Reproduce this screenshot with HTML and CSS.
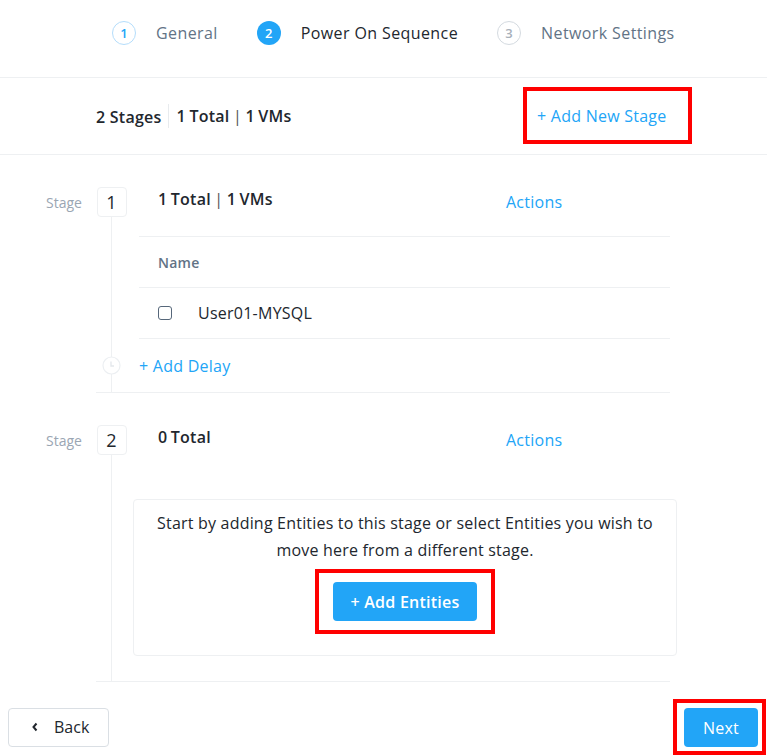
FILE: index.html
```html
<!DOCTYPE html>
<html>
<head>
<meta charset="utf-8">
<link rel="stylesheet" href="styles.css">
</head>
<body>
<div class="stepper">
  <div class="step done"><span class="circle">1</span><span class="step-text">General</span></div>
  <div class="step active"><span class="circle">2</span><span class="step-text">Power On Sequence</span></div>
  <div class="step todo"><span class="circle">3</span><span class="step-text">Network Settings</span></div>
</div>

<div class="summary">
  <div class="summary-left">
    <span class="summary-stages">2 Stages</span>
    <span class="summary-sep"></span>
    <span class="summary-total">1 Total <span class="pipe">|</span> 1 VMs</span>
  </div>
  <div class="highlight highlight-stage"><span class="link">+ Add New Stage</span></div>
</div>

<div class="stage">
  <div class="stage-label">Stage</div>
  <div class="stage-main">
    <div class="rail rail-top"><span class="stage-num">1</span><span class="rail-line"></span></div>
    <div class="stage-head">
      <span class="stage-title">1 Total <span class="pipe">|</span> 1 VMs</span>
      <span class="link actions">Actions</span>
    </div>
    <div class="rail rail-mid"></div>
    <div class="table">
      <div class="tr th">Name</div>
      <div class="tr td"><span class="checkbox"></span><span>User01-MYSQL</span></div>
    </div>
    <div class="rail rail-mid rail-delay">
      <svg class="delay-icon" width="19" height="19" viewBox="0 0 19 19"><circle cx="9.5" cy="9.5" r="8.5" fill="#fff" stroke="#eceff2" stroke-width="1.2"/><path d="M9 5.5v4.5h3" fill="none" stroke="#e3e7eb" stroke-width="1.3"/></svg>
    </div>
    <div class="delay-row"><span class="link">+ Add Delay</span></div>
  </div>
</div>

<div class="stage">
  <div class="stage-label">Stage</div>
  <div class="stage-main stage-main-2">
    <div class="rail rail-top"><span class="stage-num">2</span><span class="rail-line"></span></div>
    <div class="stage-head">
      <span class="stage-title">0 Total</span>
      <span class="link actions">Actions</span>
    </div>
    <div class="rail rail-mid"></div>
    <div class="empty-wrap">
      <div class="empty">
        <p class="empty-text">Start by adding Entities to this stage or select Entities you wish to move here from a different stage.</p>
        <div class="highlight highlight-entities"><button class="btn-primary btn-entities">+ Add Entities</button></div>
      </div>
    </div>
  </div>
</div>

<div class="footer">
  <button class="btn-back"><svg width="8" height="10" viewBox="0 0 8 10"><path d="M5.5 1.5L2.5 5l3 3.5" fill="none" stroke="#22272e" stroke-width="2"/></svg><span>Back</span></button>
  <div class="highlight highlight-next"><button class="btn-primary btn-next">Next</button></div>
</div>
</body>
</html>
```

FILE: styles.css
```css
* { box-sizing: border-box; }
body {
  margin: 0;
  font-family: "Open Sans", "Liberation Sans", sans-serif;
  color: #22272e;
  background: #fff;
  font-size: 16px;
  letter-spacing: 0.25px;
}

.stepper {
  height: 78px;
  border-bottom: 1px solid #eef0f2;
  display: flex;
  align-items: center;
  padding-left: 112px;
  padding-bottom: 12px;
  gap: 39px;
}
.step { display: flex; align-items: center; gap: 20px; }
.circle {
  width: 24px; height: 24px; border-radius: 50%;
  display: flex; align-items: center; justify-content: center;
  font-size: 13px; font-weight: 600; letter-spacing: 0;
}
.step-text { font-size: 16px; color: #627386; letter-spacing: 0.4px; }
.done .circle { border: 1px solid #b4ddfb; color: #22a5f7; }
.active .circle { background: #22a5f7; color: #fff; }
.active .step-text { color: #22272e; }
.todo .circle { border: 1px solid #d4dae0; color: #a7b0ba; }

.summary {
  height: 77px;
  border-bottom: 1px solid #eef0f2;
  display: flex;
  align-items: center;
  justify-content: space-between;
  padding: 0 75px 0 96px;
}
.summary-left { display: flex; align-items: center; }
.summary-stages { font-weight: 600; font-size: 16px; padding-top: 2px; }
.summary-sep { width: 1px; height: 24px; background: #e8ebee; margin: 0 8px 0 6px; }
.summary-total, .stage-title { font-weight: 600; font-size: 16px; word-spacing: -1px; }
.pipe { font-weight: 400; color: #555; }

.link { color: #22a5f7; font-size: 16px; }

.highlight { border: 4px solid #ff0000; }
.highlight-stage {
  width: 169px; height: 57px;
  display: flex; align-items: center;
  padding-left: 10px;
  margin-top: -1px;
}

.stage { display: flex; padding: 0 97px 0 46px; }
.stage-label {
  width: 50px;
  font-size: 14px;
  color: #9aa6b3;
  letter-spacing: 0;
  padding-top: 38px;
}
.stage-main {
  flex: 1;
  display: grid;
  grid-template-columns: 31px 1fr;
  column-gap: 12px;
  border-bottom: 1px solid #eef0f2;
}
.rail { display: flex; flex-direction: column; align-items: center; }
.rail-top { padding-top: 32px; }
.stage-num {
  width: 30px; height: 30px;
  border: 1px solid #eef0f2; border-radius: 4px;
  display: flex; align-items: center; justify-content: center;
  font-size: 18px; color: #22272e;
}
.rail-line { flex: 1; width: 1px; background: #eef0f2; }
.rail-mid {
  background: linear-gradient(#eef0f2, #eef0f2) center / 1px 100% no-repeat;
}
.rail-delay { justify-content: center; }
.delay-icon { display: block; }

.stage-head {
  padding: 32px 0 0 19px;
  height: 81px;
  display: grid;
  grid-template-columns: 1fr 164px;
  align-items: start;
}
.stage-head .stage-title { line-height: 22px; padding-top: 1px; }
.stage-head .actions { line-height: 22px; padding-top: 4px; }

.tr {
  height: 51px;
  border-top: 1px solid #eef0f2;
  display: flex; align-items: center;
  padding-left: 19px;
}
.th { font-size: 14px; font-weight: 600; color: #627386; }
.td { font-size: 16px; gap: 26px; }
.checkbox {
  width: 14px; height: 14px;
  border: 1px solid #56677a; border-radius: 3px;
  display: inline-block;
}
.delay-row {
  height: 54px;
  border-top: 1px solid #eef0f2;
  display: flex; align-items: center;
}

.empty-wrap { padding: 25px 0 25px; }
.empty {
  margin: 0 -7px 0 -6px;
  border: 1px solid #eef0f2;
  border-radius: 4px;
  height: 157px;
  display: flex; flex-direction: column; align-items: center;
  padding-top: 10px;
}
.empty-text {
  margin: 0;
  max-width: 515px;
  text-align: center;
  font-size: 16px;
  letter-spacing: 0.2px;
  line-height: 27px;
  color: #22272e;
}
.highlight-entities { padding: 9px 14px; margin-top: 5px; }
.btn-primary {
  background: #22a5f7; color: #fff; border: 0; border-radius: 4px;
  font-family: inherit; font-size: 16px; font-weight: 600; letter-spacing: 0.25px;
}
.btn-entities { width: 144px; height: 39px; }

.footer {
  display: flex; align-items: center; justify-content: space-between;
  padding: 17px 1px 0 8px;
}
.btn-back {
  width: 101px; height: 39px;
  border: 1px solid #dadfe4; border-radius: 4px; background: #fff;
  display: flex; align-items: center; gap: 15px;
  padding-left: 22px;
  font-family: inherit; font-size: 16px; color: #22272e;
}
.highlight-next { padding: 5px 4px 4px 7px; }
.btn-next { width: 74px; height: 39px; display: block; font-weight: 500; }
```
